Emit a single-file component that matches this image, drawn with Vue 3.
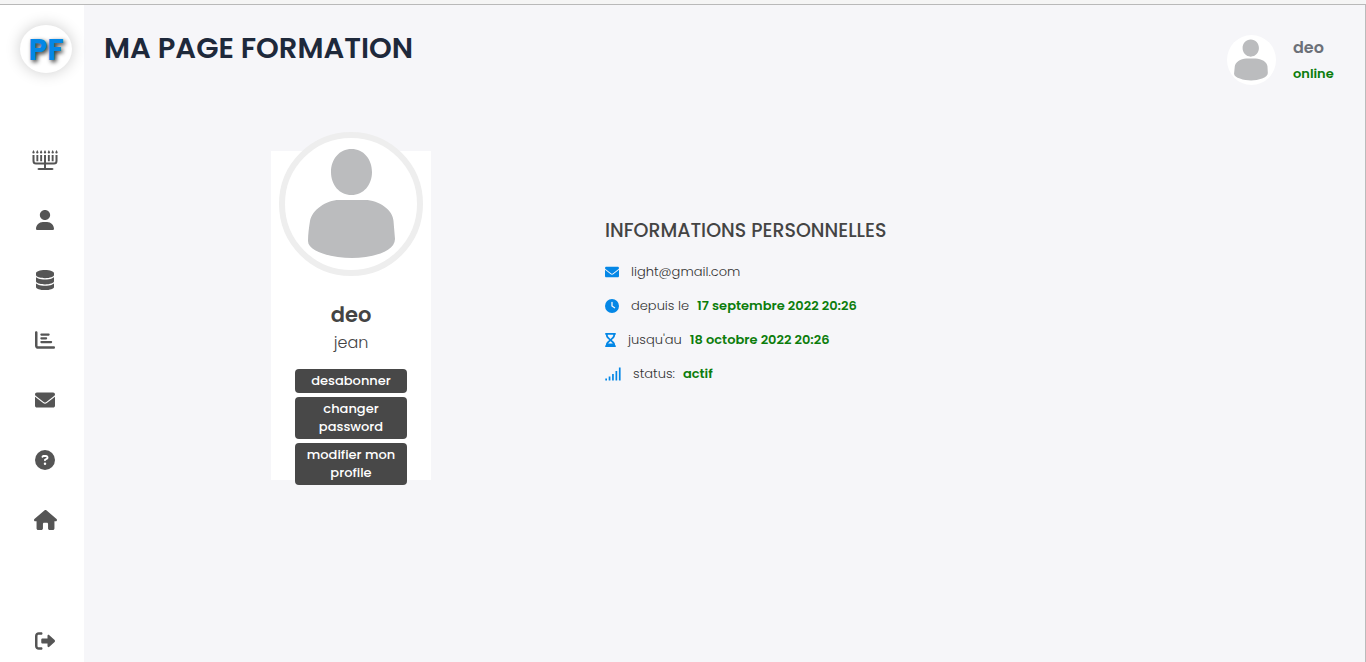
<script setup>
const links = [
  { label: 'Formations', w: 26, h: 20, box: '0 0 26 20', d: 'M1.500 0l1.200 2.300a1.200 1.200 0 0 1-2.400 0zM5.300 0l1.200 2.300a1.200 1.200 0 0 1-2.400 0zM9.100 0l1.200 2.300a1.200 1.200 0 0 1-2.400 0zM13 0l1.200 2.300a1.200 1.200 0 0 1-2.400 0zM16.900 0l1.200 2.300a1.200 1.200 0 0 1-2.400 0zM20.700 0l1.200 2.300a1.200 1.200 0 0 1-2.400 0zM24.500 0l1.200 2.300a1.200 1.200 0 0 1-2.400 0zM0.500 5h2v6q0 1.500 1.500 1.500h8V5h2v7.500h8q1.500 0 1.500-1.500V5h2v6q0 3.500-3.500 3.500h-8V18h6q1.500 0 1.500 1t-1.500 1h-13Q5.500 20 5.500 19t1.500-1h5v-3.500H4Q0.500 14.500 0.500 11zM4.400 5h1.900v6.200H4.400zM8.200 5h1.900v6.200H8.200zM15.900 5h1.900v6.200h-1.900zM19.700 5h1.900v6.200h-1.900z' },
  { label: 'Profil', w: 18, h: 20, box: '0 0 448 512', d: 'M224 256c70.7 0 128-57.31 128-128s-57.3-128-128-128C153.3 0 96 57.31 96 128S153.3 256 224 256zM274.7 304H173.3C77.61 304 0 381.6 0 477.3c0 19.14 15.52 34.67 34.66 34.67h378.7C432.5 512 448 496.5 448 477.3C448 381.6 370.4 304 274.7 304z' },
  { label: 'Données', w: 18, h: 20, box: '0 0 448 512', d: 'M448 80v48c0 44.2-100.3 80-224 80S0 172.2 0 128V80C0 35.8 100.3 0 224 0S448 35.8 448 80zM393.200 214.700c20.800-7.400 39.900-16.900 54.800-28.600V288c0 44.200-100.300 80-224 80S0 332.200 0 288V186.100c14.900 11.800 34 21.200 54.800 28.600C99.700 230.700 159.500 240 224 240s124.300-9.300 169.200-25.300zM0 346.100c14.900 11.800 34 21.200 54.800 28.600C99.700 390.700 159.500 400 224 400s124.300-9.300 169.200-25.300c20.800-7.400 39.900-16.900 54.800-28.600V432c0 44.200-100.300 80-224 80S0 476.200 0 432v-85.900z' },
  { label: 'Statistiques', w: 20, h: 20, box: '0 0 512 512', d: 'M32 32c17.700 0 32 14.300 32 32v336c0 8.800 7.200 16 16 16h400c17.700 0 32 14.300 32 32s-14.300 32-32 32H80c-44.200 0-80-35.800-80-80V64c0-17.700 14.300-32 32-32zM160 88h192c32 0 32 56 0 56H160c-32 0-32-56 0-56zM160 184h128c32 0 32 56 0 56H160c-32 0-32-56 0-56zM160 280h256c32 0 32 56 0 56H160c-32 0-32-56 0-56z' },
  { label: 'Messages', w: 20, h: 20, box: '0 0 512 512', d: 'M256 352c-16.53 0-33.06-5.422-47.16-16.41L0 173.2V400C0 426.5 21.49 448 48 448h416c26.51 0 48-21.49 48-48V173.2l-208.8 162.500C289.1 346.6 272.5 352 256 352zM16.29 145.3l212.2 165.1c16.19 12.6 38.87 12.6 55.06 0l212.2-165.1C505.1 137.3 512 125 512 112C512 85.49 490.5 64 464 64h-416C21.49 64 0 85.49 0 112C0 125 6.01 137.3 16.29 145.3z' },
  { label: 'Aide', w: 20, h: 20, box: '0 0 512 512', d: 'M256 512A256 256 0 1 0 256 0a256 256 0 1 0 0 512zM169.800 165.300c7.900-22.300 29.100-37.300 52.800-37.300h58.300c34.900 0 63.100 28.300 63.100 63.100c0 22.600-12.100 43.500-31.700 54.800L280 264.400c-.2 13-10.900 23.600-24 23.600c-13.300 0-24-10.700-24-24V250.500c0-8.600 4.600-16.500 12.100-20.800l44.300-25.400c4.700-2.700 7.600-7.700 7.600-13.100c0-8.400-6.800-15.100-15.100-15.100H222.600c-3.400 0-6.400 2.100-7.500 5.300l-.4 1.200c-4.400 12.500-18.200 19-30.600 14.600s-19-18.200-14.600-30.600l.3-1.300zM224 352a32 32 0 1 1 64 0a32 32 0 1 1-64 0z' },
  { label: 'Accueil', w: 23, h: 20, box: '0 0 576 512', d: 'M575.8 255.500c0 18-15 32.100-32 32.100h-32l.7 160.200c0 2.700-.2 5.400-.5 8.100V472c0 22.100-17.900 40-40 40H392c-22.100 0-40-17.900-40-40V360c0-17.700-14.300-32-32-32h-64c-17.700 0-32 14.300-32 32v112c0 22.100-17.900 40-40 40h-80c-22.100 0-40-17.900-40-40V287.600H32c-18 0-32-14-32-32.100c0-9 3-17 10-24L266.400 8c7-7 15-8 22-8s15 2 21 7L564.800 231.500c8 7 12 15 11 24z' }
]

const envelope = links[4].d

const details = [
  { text: 'light@gmail.com', w: 14, h: 14, box: '0 0 512 512', d: envelope },
  { text: 'depuis le', value: '17 septembre 2022 20:26', w: 14, h: 14, box: '0 0 512 512', d: 'M256 0a256 256 0 1 1 0 512A256 256 0 1 1 256 0zM232 120V256c0 8 4 15.500 10.700 20l96 64c11 7.400 25.900 4.400 33.300-6.700s4.400-25.900-6.700-33.300L280 243.200V120c0-13.300-10.700-24-24-24s-24 10.700-24 24z' },
  { text: "jusqu'au", value: '18 octobre 2022 20:26', w: 11, h: 14, box: '0 0 384 512', d: 'M32 0h320c42 0 42 64 0 64v11c0 42-17 83-47 113l-68 68 68 68c30 30 47 71 47 113v11c42 0 42 64 0 64H32c-42 0-42-64 0-64v-11c0-42 17-83 47-113l68-68-68-68C49 158 32 117 32 75V64C-10 64-10 0 32 0zM96 64v11c0 42 17 63 37 83l59 60 59-60c20-20 37-41 37-83V64zM111 384h162c-4-6-8-11-13-16l-68-67-68 67c-5 5-9 10-13 16z' },
  { text: 'status:', value: 'actif', w: 16, h: 14, box: '0 0 16 14', d: 'M0.300 11.500h1.700V13.500H0.300zM3.700 9.500h1.700v4H3.700zM7.100 7h1.700v6.500H7.100zM10.500 4h1.700v9.500h-1.700zM13.900 0.500h1.700v13h-1.700z' }
]

const actions = ['desabonner', 'changer password', 'modifier mon profile']
</script>

<template>
  <div class="page">
    <div class="strip"></div>
    <div class="shell">
      <aside class="sidebar">
        <a class="logo" href="#">PF</a>
        <nav class="menu">
          <a v-for="l in links" :key="l.label" href="#" :aria-label="l.label">
            <svg :width="l.w" :height="l.h" :viewBox="l.box" preserveAspectRatio="none"><path :d="l.d" fill-rule="evenodd" /></svg>
          </a>
        </nav>
        <a class="logout" href="#" aria-label="Déconnexion">
          <svg width="20" height="20" viewBox="0 0 512 512">
            <path d="M160 416H96c-17.700 0-32-14.300-32-32V128c0-17.700 14.300-32 32-32h64c17.700 0 32-14.300 32-32s-14.300-32-32-32H96C43 32 0 75 0 128v256c0 53 43 96 96 96h64c17.700 0 32-14.300 32-32s-14.300-32-32-32zM502.600 233.400L367 107c-20-18-47-5-47 18v67H192c-17.700 0-32 14.300-32 32v64c0 17.700 14.300 32 32 32h128v67c0 23 27 36 47 18l135.600-126.400c12.500-12.500 12.500-32.700 0-45.200z" />
          </svg>
        </a>
      </aside>

      <main class="main">
        <header class="header">
          <h1>MA PAGE FORMATION</h1>
          <div class="user">
            <svg class="user-photo" viewBox="0 0 132 132" aria-hidden="true">
              <path class="figure" d="M64 11c13 0 22 10 22 23s-9 23-22 23S42 47 42 34s9-23 22-23zM52 62h25c16 0 31 10 32 21l1 18c0 13-26 20-45 20s-46-7-46-18l2-20c1-10 15-21 31-21z" />
            </svg>
            <div>
              <p class="user-name">deo</p>
              <p class="user-state">online</p>
            </div>
          </div>
        </header>

        <div class="profile">
          <section class="card">
            <svg class="photo" viewBox="0 0 132 132" aria-hidden="true">
              <path class="figure" d="M66.500 11c12 0 20.500 10 20.500 23s-8.500 23-20.500 23S46 47 46 34s8.500-23 20.500-23zM54 62h26c14 0 28 10 28.500 21l1.500 18c0 13-24 19-43 19s-44-6-44-17c0-7 1-14 2-20 2-11 16-21 29-21z" />
            </svg>
            <h2>deo</h2>
            <p class="first-name">jean</p>
            <div class="actions">
              <button v-for="a in actions" :key="a" type="button">{{ a }}</button>
            </div>
          </section>

          <section class="infos">
            <h3>INFORMATIONS PERSONNELLES</h3>
            <ul>
              <li v-for="d in details" :key="d.text">
                <svg :width="d.w" :height="d.h" :viewBox="d.box" preserveAspectRatio="none" aria-hidden="true"><path :d="d.d" fill-rule="evenodd" /></svg>
                <span class="text">{{ d.text }}</span>
                <strong v-if="d.value">{{ d.value }}</strong>
              </li>
            </ul>
          </section>
        </div>
      </main>
    </div>
  </div>
</template>

<style>
body {
  margin: 0;
}
</style>

<style scoped>
.page {
  box-sizing: border-box;
  min-height: 100vh;
  display: flex;
  flex-direction: column;
  font-family: Poppins, Inter, "Open Sans", sans-serif;
  color: #444;
  background: #f6f6f9;
}
h1, h2, h3, p, ul {
  margin: 0;
  padding: 0;
}
.strip {
  height: 4px;
  background: #f5f5f5;
  border-bottom: 1px solid #b9b9b9;
}
.shell {
  flex: 1;
  display: flex;
  border-right: 1px solid #bbb;
}
.sidebar {
  box-sizing: border-box;
  width: 84px;
  flex: none;
  display: flex;
  flex-direction: column;
  align-items: center;
  padding: 20px 0 11px 6px;
  background: #fff;
}
.logo {
  width: 52px;
  height: 48px;
  margin-left: 2px;
  border-radius: 50%;
  background: #fff;
  box-shadow: 0 0 15px rgba(0, 0, 0, 0.2);
  color: #0487e6;
  font-size: 30px;
  font-weight: 700;
  line-height: 49px;
  text-align: center;
  text-decoration: none;
  text-shadow: 2px 2px 4px rgba(0, 0, 0, 0.8);
}
.menu {
  display: flex;
  flex-direction: column;
  margin-top: 57px;
}
.menu a {
  display: flex;
  align-items: center;
  justify-content: center;
  height: 60px;
}
.sidebar svg {
  display: block;
  fill: #555;
}
.logout {
  margin-top: auto;
}
.main {
  flex: 1;
  min-width: 0;
}
.header {
  display: flex;
  justify-content: space-between;
  align-items: flex-start;
  padding: 22px 30px 0 20px;
}
h1 {
  font-size: 29px;
  font-weight: 600;
  line-height: 42px;
  color: #1e293b;
}
.user {
  display: flex;
  gap: 17px;
  padding-top: 8px;
}
.user-photo {
  width: 49px;
  height: 50px;
  border-radius: 50%;
  background: #fff;
}
.figure {
  fill: #bbbcbe;
}
.user-name {
  font-size: 16px;
  font-weight: 600;
  line-height: 26px;
  color: #6c7078;
}
.user-state {
  min-width: 42px;
  margin-top: 2px;
  font-size: 13px;
  font-weight: 600;
  line-height: 22px;
  color: #0c7d0c;
}
.profile {
  display: flex;
  align-items: flex-start;
  gap: 174px;
  padding: 66px 20px 0 187px;
}
.card {
  width: 160px;
  flex: none;
  display: flex;
  flex-direction: column;
  align-items: center;
  background: #fff;
}
.photo {
  box-sizing: border-box;
  width: 144px;
  height: 144px;
  margin-top: -19px;
  border: 6px solid #eee;
  border-radius: 50%;
  background: #fff;
}
h2 {
  margin-top: 24px;
  font-size: 21px;
  font-weight: 600;
  line-height: 30px;
}
.first-name {
  font-size: 16px;
  font-weight: 300;
  line-height: 26px;
}
.actions {
  display: flex;
  flex-direction: column;
  gap: 4px;
  width: 112px;
  margin: 13px 0 -5px;
}
button {
  padding: 3px 8px;
  border: 0;
  border-radius: 4px;
  background: #484848;
  color: #fff;
  font-family: inherit;
  font-size: 13px;
  font-weight: 500;
  line-height: 18px;
}
.infos {
  padding-top: 66px;
}
h3 {
  font-size: 19px;
  font-weight: 500;
  line-height: 28px;
}
ul {
  margin-top: 10px;
  list-style: none;
}
li {
  display: flex;
  align-items: center;
  height: 34px;
  font-size: 13px;
}
li svg {
  flex: none;
  fill: #0487e6;
}
.text {
  margin-left: 12px;
  font-weight: 300;
  color: #333;
}
strong {
  margin-left: 8px;
  font-weight: 600;
  color: #0c7d0c;
}
</style>
